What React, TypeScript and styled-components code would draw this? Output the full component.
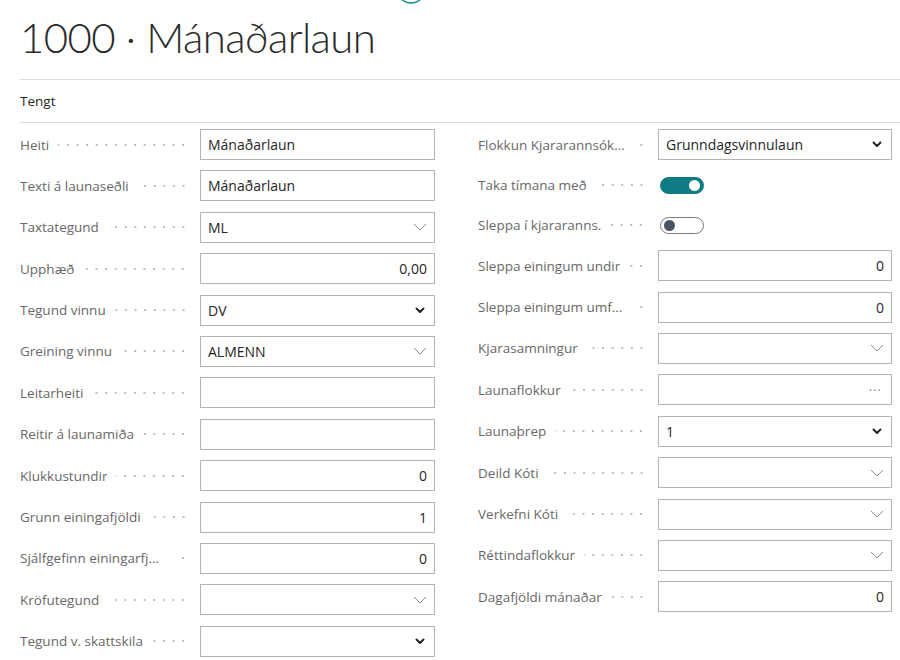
import { createGlobalStyle } from 'styled-components'
import styled from 'styled-components'

const GlobalStyle = createGlobalStyle`
  html, body {
    margin: 0;
    padding: 0;
    background: #ffffff;
  }
  body {
    font-family: "Open Sans", "Noto Sans", "Liberation Sans", sans-serif;
    color: #212121;
  }
`

const Page = styled.div`
  position: relative;
  width: 900px;
  height: 660px;
  overflow: hidden;
  padding-left: 20px;
  box-sizing: border-box;
`

const TopBadge = styled.svg`
  position: absolute;
  left: 396px;
  top: -26px;
`

const Title = styled.h1`
  margin: 0;
  padding-top: 10px;
  font-family: Lato, "Open Sans", sans-serif;
  font-size: 42px;
  line-height: 54px;
  font-weight: 300;
  letter-spacing: -0.6px;
  color: #2b2b2b;
  white-space: nowrap;
`

const TabBar = styled.div`
  margin-top: 15px;
  height: 42px;
  border-top: 1px solid #dcdcdc;
  border-bottom: 1px solid #dcdcdc;
  display: flex;
  align-items: center;
  font-size: 13.5px;
  color: #262626;
`

const Columns = styled.div`
  display: grid;
  grid-template-columns: 415px 414px;
  column-gap: 43px;
  padding-top: 6px;
`

const Column = styled.div`
  display: flex;
  flex-direction: column;
  gap: 10.4px;
`

const Row = styled.div<{ compact?: boolean }>`
  display: grid;
  grid-template-columns: 180px 1fr;
  height: ${p => (p.compact ? '29.5px' : '31px')};
  align-items: center;
`

const Label = styled.div`
  display: flex;
  align-items: center;
  min-width: 0;
  padding-right: 12px;
  font-size: 13.5px;
  color: #686868;
`

const LabelText = styled.span`
  flex: 0 1 auto;
  white-space: nowrap;
  overflow: hidden;
  text-overflow: ellipsis;
`

const Leader = styled.span`
  flex: 1 0 12px;
  height: 6px;
  margin-left: 9px;
  background-image: radial-gradient(circle, #bdbdbd 0.8px, transparent 1.2px);
  background-size: 9.6px 6px;
  background-repeat: repeat-x;
  background-position: right center;
`

const Box = styled.div<{ align?: 'left' | 'right' }>`
  height: 31px;
  box-sizing: border-box;
  border: 1px solid #b4b4b4;
  background: #fff;
  display: flex;
  align-items: center;
  gap: 8px;
  justify-content: ${p => (p.align === 'right' ? 'flex-end' : 'space-between')};
  padding: 0 7px 0 7px;
  font-size: 14px;
  color: #262626;
  white-space: nowrap;
`

const Value = styled.span`
  overflow: hidden;
  text-overflow: ellipsis;
`

const Dots = styled.span`
  color: #8a8a8a;
  font-size: 13px;
  letter-spacing: 1px;
  padding-right: 2px;
`

const Toggle = styled.div<{ on: boolean }>`
  width: 44px;
  height: 17px;
  margin-left: 2px;
  box-sizing: border-box;
  border-radius: 9px;
  border: 1px solid ${p => (p.on ? '#0f7c84' : '#7a7a7a')};
  background: ${p => (p.on ? '#0f7c84' : '#ffffff')};
  display: flex;
  align-items: center;
  justify-content: ${p => (p.on ? 'flex-end' : 'flex-start')};
  padding: 0 3px;

  &::after {
    content: '';
    width: 11px;
    height: 11px;
    border-radius: 50%;
    background: ${p => (p.on ? '#ffffff' : '#4b5263')};
  }
`

const ThinChevron = () => (
  <svg width="14" height="8" viewBox="0 0 14 8" style={{ flexShrink: 0 }}>
    <path d="M1 1 L7 7 L13 1" fill="none" stroke="#8c8c8c" strokeWidth="1" />
  </svg>
)

const BoldChevron = () => (
  <svg width="10" height="7" viewBox="0 0 10 7" style={{ marginRight: 2, flexShrink: 0 }}>
    <path d="M1.5 1.5 L5 5 L8.5 1.5" fill="none" stroke="#262626" strokeWidth="2" strokeLinecap="round" strokeLinejoin="round" />
  </svg>
)

type Kind = 'text' | 'number' | 'thin' | 'bold' | 'lookup' | 'on' | 'off'

interface Field {
  label: string
  kind: Kind
  value?: string
}

const leftFields: Field[] = [
  { label: 'Heiti', kind: 'text', value: 'Mánaðarlaun' },
  { label: 'Texti á launaseðli', kind: 'text', value: 'Mánaðarlaun' },
  { label: 'Taxtategund', kind: 'thin', value: 'ML' },
  { label: 'Upphæð', kind: 'number', value: '0,00' },
  { label: 'Tegund vinnu', kind: 'bold', value: 'DV' },
  { label: 'Greining vinnu', kind: 'thin', value: 'ALMENN' },
  { label: 'Leitarheiti', kind: 'text' },
  { label: 'Reitir á launamiða', kind: 'text' },
  { label: 'Klukkustundir', kind: 'number', value: '0' },
  { label: 'Grunn einingafjöldi', kind: 'number', value: '1' },
  { label: 'Sjálfgefinn einingarfjöldi', kind: 'number', value: '0' },
  { label: 'Kröfutegund', kind: 'thin' },
  { label: 'Tegund v. skattskila', kind: 'bold' },
]

const rightFields: Field[] = [
  { label: 'Flokkun Kjararannsóknarnefndar', kind: 'bold', value: 'Grunndagsvinnulaun' },
  { label: 'Taka tímana með', kind: 'on' },
  { label: 'Sleppa í kjararanns.', kind: 'off' },
  { label: 'Sleppa einingum undir', kind: 'number', value: '0' },
  { label: 'Sleppa einingum umfram', kind: 'number', value: '0' },
  { label: 'Kjarasamningur', kind: 'thin' },
  { label: 'Launaflokkur', kind: 'lookup' },
  { label: 'Launaþrep', kind: 'bold', value: '1' },
  { label: 'Deild Kóti', kind: 'thin' },
  { label: 'Verkefni Kóti', kind: 'thin' },
  { label: 'Réttindaflokkur', kind: 'thin' },
  { label: 'Dagafjöldi mánaðar', kind: 'number', value: '0' },
]

function Control({ field }: { field: Field }) {
  switch (field.kind) {
    case 'on':
      return <Toggle on={true} />
    case 'off':
      return <Toggle on={false} />
    case 'number':
      return (
        <Box align="right">
          <Value>{field.value}</Value>
        </Box>
      )
    case 'thin':
      return (
        <Box>
          <Value>{field.value}</Value>
          <ThinChevron />
        </Box>
      )
    case 'bold':
      return (
        <Box>
          <Value>{field.value}</Value>
          <BoldChevron />
        </Box>
      )
    case 'lookup':
      return (
        <Box align="right">
          <Dots>···</Dots>
        </Box>
      )
    default:
      return (
        <Box>
          <Value>{field.value}</Value>
        </Box>
      )
  }
}

function FieldList({ fields }: { fields: Field[] }) {
  return (
    <Column>
      {fields.map(f => (
        <Row key={f.label} compact={f.kind === 'on' || f.kind === 'off'}>
          <Label>
            <LabelText>{f.label}</LabelText>
            <Leader />
          </Label>
          <Control field={f} />
        </Row>
      ))}
    </Column>
  )
}

export default function App() {
  return (
    <>
      <GlobalStyle />
      <Page>
        <TopBadge width="32" height="32" viewBox="0 0 32 32">
          <circle cx="15" cy="15" r="14" fill="none" stroke="#138a8f" strokeWidth="1.4" />
        </TopBadge>
        <Title>1000 · Mánaðarlaun</Title>
        <TabBar>Tengt</TabBar>
        <Columns>
          <FieldList fields={leftFields} />
          <FieldList fields={rightFields} />
        </Columns>
      </Page>
    </>
  )
}
